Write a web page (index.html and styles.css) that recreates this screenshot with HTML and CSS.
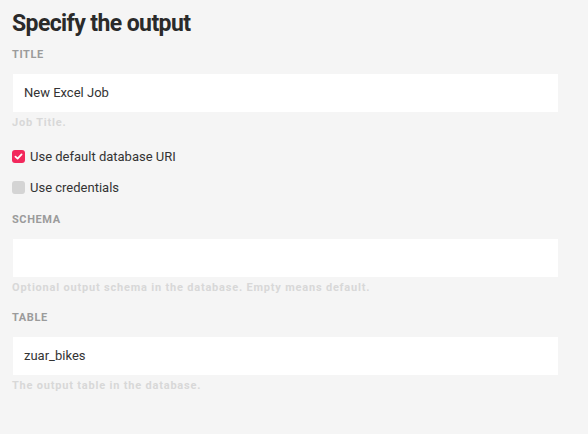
FILE: index.html
```html
<!DOCTYPE html>
<html>
<head>
<meta charset="utf-8">
<link rel="stylesheet" href="styles.css">
</head>
<body>
<div class="page">
  <h1 class="heading">Specify the output</h1>
  <div class="form">
    <div class="field">
      <div class="label">TITLE</div>
      <div class="input">New Excel Job</div>
      <div class="help">Job Title.</div>
    </div>
    <div class="checks">
      <div class="check">
        <span class="box on">
          <svg width="9" height="9" viewBox="0 0 10 10"><path d="M1.6 5.2 L4 7.4 L8.4 2.6" fill="none" stroke="#fff" stroke-width="2" stroke-linecap="round" stroke-linejoin="round"/></svg>
        </span>
        <span class="check-text">Use default database URI</span>
      </div>
      <div class="check">
        <span class="box"></span>
        <span class="check-text">Use credentials</span>
      </div>
    </div>
    <div class="field">
      <div class="label">SCHEMA</div>
      <div class="input"></div>
      <div class="help">Optional output schema in the database. Empty means default.</div>
    </div>
    <div class="field">
      <div class="label">TABLE</div>
      <div class="input">zuar_bikes</div>
      <div class="help">The output table in the database.</div>
    </div>
  </div>
</div>
</body>
</html>
```
FILE: styles.css
```css
html, body {
  margin: 0;
  padding: 0;
  background: #f5f5f5;
  font-family: Roboto, "Liberation Sans", sans-serif;
}
.page {
  padding: 8px 30px 0 12px;
}
.heading {
  margin: 0;
  font-size: 23px;
  line-height: 32px;
  font-weight: 700;
  letter-spacing: -0.6px;
  color: #2a2a2a;
}
.form {
  margin-top: 8px;
  display: flex;
  flex-direction: column;
  gap: 16px;
}
.field {
  display: flex;
  flex-direction: column;
}
.label {
  font-size: 11px;
  line-height: 14px;
  font-weight: 700;
  letter-spacing: 0.6px;
  color: #9b9b9b;
  margin-bottom: 12px;
}
.input {
  margin-left: 1px;
  height: 38px;
  background: #ffffff;
  font-size: 13px;
  line-height: 38px;
  color: #333333;
  padding: 0 11px;
  box-sizing: border-box;
}
.help {
  margin-top: 4px;
  font-size: 11px;
  line-height: 14px;
  font-weight: 700;
  letter-spacing: 0.8px;
  color: #d8d8d8;
}
.checks {
  display: flex;
  flex-direction: column;
  gap: 11px;
}
.check {
  display: flex;
  align-items: center;
  height: 20px;
}
.box {
  width: 13px;
  height: 13px;
  border-radius: 3px;
  background: #d4d4d4;
  display: flex;
  align-items: center;
  justify-content: center;
  margin-right: 5px;
}
.box.on {
  background: #f2285c;
}
.check-text {
  font-size: 13px;
  color: #333333;
}
```
